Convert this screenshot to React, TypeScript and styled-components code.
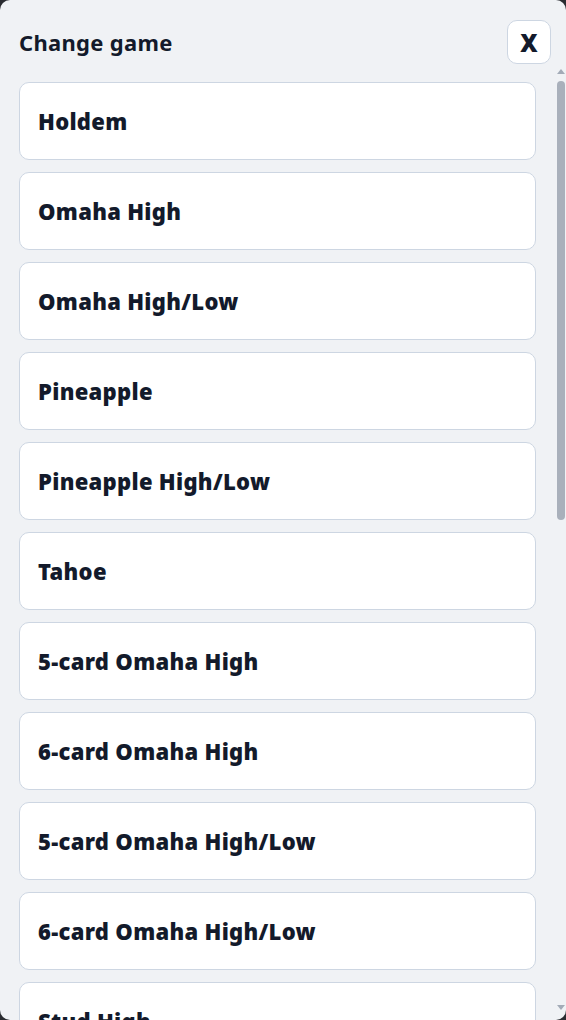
import React from 'react';
import styled, {createGlobalStyle} from 'styled-components';

const games: string[] = [
    'Holdem',
    'Omaha High',
    'Omaha High/Low',
    'Pineapple',
    'Pineapple High/Low',
    'Tahoe',
    '5-card Omaha High',
    '6-card Omaha High',
    '5-card Omaha High/Low',
    '6-card Omaha High/Low',
    'Stud High',
    'Stud High/Low',
    'Razz',
    '2-7 Triple Draw',
    'A-5 Triple Draw',
    'Badugi',
    'Five Card Draw',
    'Courchevel',
    'Courchevel High/Low',
    'Irish',
    'Big O',
]

const GlobalStyle = createGlobalStyle`
  html, body {
    margin: 0;
    padding: 0;
    background: #2a2c31;
    font-family: "Noto Sans", "Open Sans", sans-serif;
  }
`

const App = () => {
    return (
        <>
            <GlobalStyle/>
            <Panel>
                <Header>
                    <Title>Change game</Title>
                    <CloseButton type="button">X</CloseButton>
                </Header>
                <Body>
                    <GameList>
                        {
                            games.map((name, index) => {
                                return <GameItem key={index}>
                                    <GameName>{name}</GameName>
                                </GameItem>
                            })
                        }
                    </GameList>
                    {/* scroll indicator, headless hides the native one */}
                    <ScrollTrack>
                        <Arrow $dir="up"/>
                        <Thumb/>
                        <Arrow $dir="down"/>
                    </ScrollTrack>
                </Body>
            </Panel>
        </>
    );
};

const Panel = styled.div`
  height: 1020px;
  background: #f0f2f5;
  border-radius: 10px;
  display: flex;
  flex-direction: column;
  overflow: hidden;
`
const Header = styled.div`
  display: flex;
  align-items: center;
  justify-content: space-between;
  padding: 20px 15px 2px 19px;
`
const Title = styled.h2`
  margin: 0;
  font-size: 22px;
  font-weight: 700;
  letter-spacing: 0.3px;
  color: #131a2b;
`
const CloseButton = styled.button`
  width: 44px;
  height: 44px;
  border-radius: 10px;
  border: 1px solid #cdd6e2;
  background: #ffffff;
  font-family: "Noto Sans", sans-serif;
  font-size: 24px;
  font-weight: 900;
  color: #131a2b;
  cursor: pointer;
  padding: 0;
`
const Body = styled.div`
  flex: 1;
  min-height: 0;
  display: flex;
`
const GameList = styled.div`
  flex: 1;
  overflow-y: auto;
  padding: 16px 0 16px 19px;
  display: flex;
  flex-direction: column;
  gap: 12px;
  scrollbar-width: none;
`
const GameItem = styled.div`
  flex-shrink: 0;
  width: 517px;
  height: 78px;
  box-sizing: border-box;
  background: #ffffff;
  border: 1px solid #cdd6e2;
  border-radius: 10px;
  padding: 0 18px;
  display: flex;
  align-items: center;
  cursor: pointer;
`
const GameName = styled.span`
  font-size: 22px;
  font-weight: 900;
  letter-spacing: 0.3px;
  color: #131a2b;
`
const ScrollTrack = styled.div`
  width: 15px;
  flex-shrink: 0;
  display: flex;
  flex-direction: column;
  align-items: flex-start;
  padding: 3px 0 10px 6px;
  box-sizing: border-box;
`
const Arrow = styled.div<{ $dir: 'up' | 'down' }>`
  width: 0;
  height: 0;
  border-left: 4px solid transparent;
  border-right: 4px solid transparent;
  ${({$dir}) => $dir === 'up'
          ? 'border-bottom: 5px solid #a3abb7;'
          : 'border-top: 5px solid #a3abb7; margin-top: auto;'}
`
const Thumb = styled.div`
  width: 8px;
  height: 439px;
  margin-top: 7px;
  border-radius: 4px;
  background: #a9b0bb;
`

export default App;
